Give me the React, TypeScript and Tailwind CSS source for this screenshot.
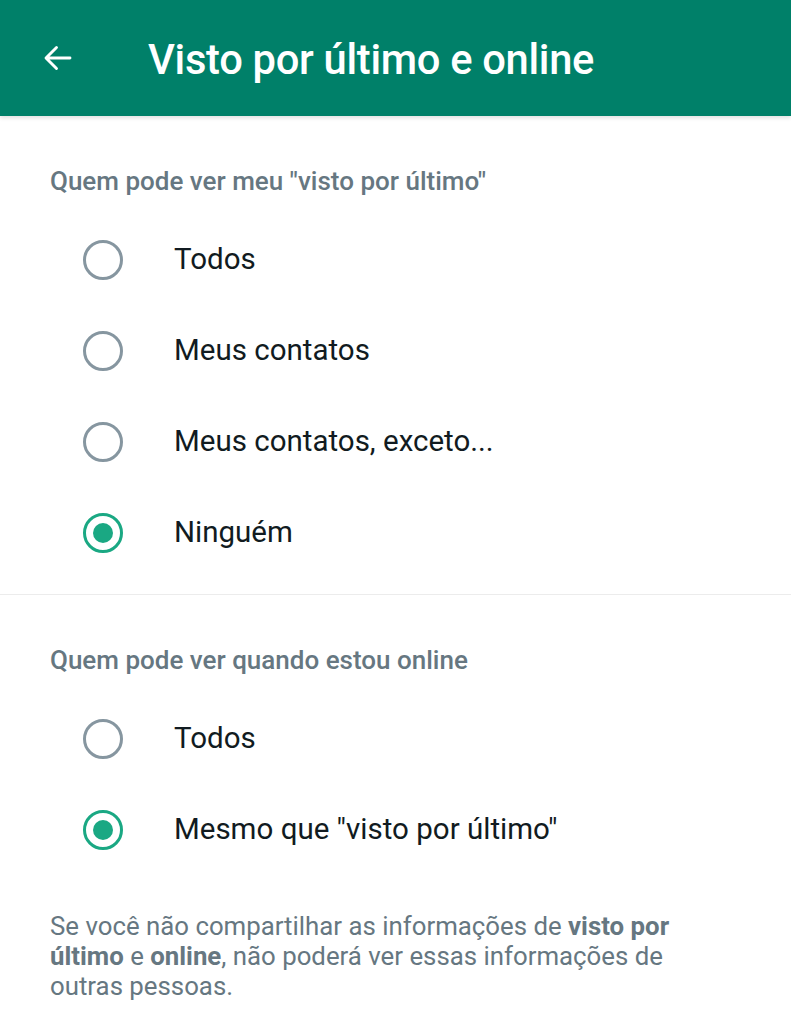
import React, { useState } from "react";

type Option = { id: string; label: string };

const lastSeenOptions: Option[] = [
  { id: "all", label: "Todos" },
  { id: "contacts", label: "Meus contatos" },
  { id: "except", label: "Meus contatos, exceto..." },
  { id: "nobody", label: "Ninguém" },
];

const onlineOptions: Option[] = [
  { id: "all", label: "Todos" },
  { id: "same", label: 'Mesmo que "visto por último"' },
];

const App = () => {
  const [lastSeen, setLastSeen] = useState("nobody");
  const [online, setOnline] = useState("same");

  return (
    <div className="min-h-screen bg-white font-['Roboto',sans-serif]">
      {/* --- HEADER --- */}
      <header className="h-[116px] bg-[#008069] flex items-center shadow-[0_2px_4px_rgba(0,0,0,0.12)] relative z-10">
        <button className="w-[148px] h-full flex items-center pl-[40px]">
          <svg width="36" height="36" viewBox="0 0 24 24" fill="none">
            <path
              d="M20 12H4.5M11 5l-7 7 7 7"
              stroke="white"
              strokeWidth="1.9"
              strokeLinecap="round"
              strokeLinejoin="round"
            />
          </svg>
        </button>
        <h1 className="text-white text-[41.7px] font-medium tracking-[-0.3px] leading-none pt-[4px]">
          Visto por último e online
        </h1>
      </header>

      {/* --- LAST SEEN --- */}
      <section className="pt-[50px] pb-[16px]">
        <h2 className="px-[50px] text-[26px] font-medium text-[#667781] leading-[30px] mb-[18px]">
          Quem pode ver meu "visto por último"
        </h2>
        <RadioGroup options={lastSeenOptions} value={lastSeen} onChange={setLastSeen} />
      </section>

      <div className="h-px bg-[#ececec]" />

      {/* --- ONLINE --- */}
      <section className="pt-[50px]">
        <h2 className="px-[50px] text-[26px] font-medium text-[#667781] leading-[30px] mb-[18px]">
          Quem pode ver quando estou online
        </h2>
        <RadioGroup options={onlineOptions} value={online} onChange={setOnline} />
      </section>

      {/* footer note, broken per line like the app shows it */}
      <p className="pl-[50px] pr-[40px] pt-[36px] text-[25.8px] leading-[30px] text-[#667781]">
        Se você não compartilhar as informações de <b className="font-bold">visto por</b>
        <br />
        <b className="font-bold">último</b> e <b className="font-bold">online</b>, não poderá ver essas informações de
        <br />
        outras pessoas.
      </p>
    </div>
  );
};

// --- Sub Components ---

const RadioGroup = ({
  options,
  value,
  onChange,
}: {
  options: Option[];
  value: string;
  onChange: (v: string) => void;
}) => (
  <div className="flex flex-col">
    {options.map((o) => {
      const active = o.id === value;
      return (
        <button
          key={o.id}
          onClick={() => onChange(o.id)}
          className="h-[91px] flex items-center pl-[83px] text-left"
        >
          <span
            className={`w-[40px] h-[40px] rounded-full border-[3px] flex items-center justify-center shrink-0 ${
              active ? "border-[#1aa883]" : "border-[#8696a0]"
            }`}
          >
            {active && <span className="w-[20px] h-[20px] rounded-full bg-[#1aa883]" />}
          </span>
          <span className="ml-[51px] text-[29.5px] text-[#111b21]">{o.label}</span>
        </button>
      );
    })}
  </div>
);

export default App;
